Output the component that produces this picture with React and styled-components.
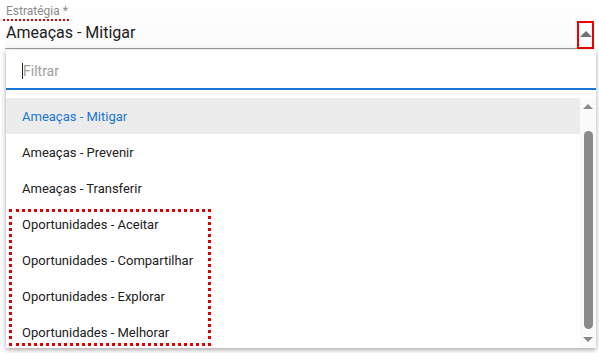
import React from 'react';
import styled, { createGlobalStyle } from 'styled-components';

const options = [
  'Ameaças - Mitigar',
  'Ameaças - Prevenir',
  'Ameaças - Transferir',
];
const opportunities = [
  'Oportunidades - Aceitar',
  'Oportunidades - Compartilhar',
  'Oportunidades - Explorar',
  'Oportunidades - Melhorar',
];

const App = () => {
  return (
    <>
      <GlobalStyle />
      <Page>
        <Field>
          <Label>Estratégia *</Label>
          <ValueRow>
            <Value>Ameaças - Mitigar</Value>
            <ArrowBox>
              <ArrowUp />
            </ArrowBox>
          </ValueRow>
        </Field>

        <Panel>
          <FilterRow>
            <Caret />
            <FilterInput placeholder="Filtrar" />
          </FilterRow>
          <ListWrap>
            <List>
              {options.map((o, i) => (
                <Item key={o} $active={i === 0}>
                  {o}
                </Item>
              ))}
              <Group>
                {opportunities.map((o) => (
                  <Item key={o}>{o}</Item>
                ))}
              </Group>
            </List>
            <ScrollBar>
              <ScrollArrow />
              <Thumb />
              <ScrollArrow $down />
            </ScrollBar>
          </ListWrap>
        </Panel>
      </Page>
    </>
  );
};

const GlobalStyle = createGlobalStyle`
  html, body {
    margin: 0;
    padding: 0;
    background: #fff;
    overflow: hidden;
  }
  body {
    font-family: Roboto, "Liberation Sans", sans-serif;
  }
`;

const Page = styled.div`
  position: relative;
  width: 599px;
  height: 353px;
  background: #fff;
`;

const Field = styled.div`
  display: flex;
  flex-direction: column;
  align-items: flex-start;
  margin: 0 5px;
  padding-top: 4px;
  height: 44px;
  border-bottom: 1px solid #9e9e9e;
  background: linear-gradient(#fff, #fafafa);
`;

const Label = styled.div`
  margin-left: -2px;
  padding: 0 1px 0 3px;
  font-size: 12px;
  line-height: 15px;
  color: #8a8a8a;
  border-bottom: 2px dotted #e00000;
`;

const ValueRow = styled.div`
  display: flex;
  align-self: stretch;
  align-items: flex-start;
  justify-content: space-between;
  flex-shrink: 0;
`;

const Value = styled.div`
  margin-left: 1px;
  padding-top: 3px;
  font-size: 16px;
  line-height: 18px;
  color: #212121;
`;

const ArrowBox = styled.div`
  display: flex;
  justify-content: center;
  box-sizing: border-box;
  width: 17px;
  height: 28px;
  padding-top: 8px;
  border: 2px solid #f00000;
`;

const ArrowUp = styled.div`
  width: 0;
  height: 0;
  border-left: 6px solid transparent;
  border-right: 6px solid transparent;
  border-bottom: 6px solid #707070;
`;

const Panel = styled.div`
  position: absolute;
  top: 50px;
  left: 6px;
  width: 590px;
  height: 298px;
  background: #fff;
  box-shadow: 0 2px 4px rgba(0, 0, 0, 0.25), 0 1px 8px rgba(0, 0, 0, 0.12);
  display: flex;
  flex-direction: column;
  overflow: hidden;
`;

const FilterRow = styled.div`
  display: flex;
  align-items: center;
  height: 38px;
  padding-left: 16px;
  border-bottom: 2px solid #1976d2;
  flex-shrink: 0;
`;

const Caret = styled.span`
  width: 1px;
  height: 16px;
  background: #222;
  margin-top: 3px;
`;

const FilterInput = styled.input`
  border: none;
  outline: none;
  padding: 0;
  margin-top: 3px;
  font-family: Roboto, "Liberation Sans", sans-serif;
  font-size: 14px;
  color: #212121;
  flex: 1;
  &::placeholder {
    color: #9e9e9e;
  }
`;

const ListWrap = styled.div`
  display: flex;
  flex: 1;
  padding-top: 8px;
  min-height: 0;
`;

const List = styled.div`
  flex: 1;
  overflow: hidden;
`;

const Item = styled.div`
  height: 36px;
  display: flex;
  align-items: center;
  padding-left: 16px;
  font-size: 13px;
  color: ${(p) => (p.$active ? '#1976d2' : '#212121')};
  background: ${(p) => (p.$active ? '#ececec' : 'transparent')};
`;

const Group = styled.div`
  position: relative;
  &::after {
    content: '';
    position: absolute;
    top: 3px;
    left: 3px;
    width: 202px;
    height: 137px;
    box-sizing: border-box;
    border: 3px dotted #e00000;
    pointer-events: none;
  }
`;

const ScrollBar = styled.div`
  width: 16px;
  display: flex;
  flex-direction: column;
  align-items: center;
  background: #fafafa;
  padding: 4px 0 4px;
  box-sizing: border-box;
`;

const ScrollArrow = styled.div`
  width: 0;
  height: 0;
  margin: 2px 0;
  border-left: 5px solid transparent;
  border-right: 5px solid transparent;
  ${(p) =>
    p.$down
      ? 'border-top: 5px solid #8a8a8a;'
      : 'border-bottom: 5px solid #8a8a8a;'}
`;

const Thumb = styled.div`
  flex: 1;
  width: 9px;
  margin: 20px 0 6px;
  border-radius: 5px;
  background: #8a8a8a;
`;

export default App;
